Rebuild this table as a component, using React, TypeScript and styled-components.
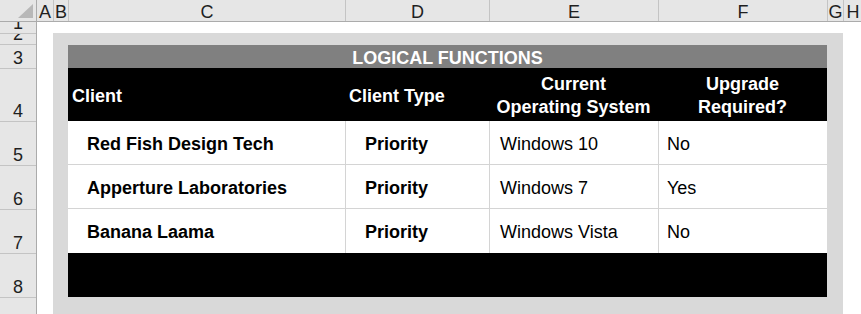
import React from "react";
import styled, { createGlobalStyle, css } from "styled-components";

const GlobalStyle = createGlobalStyle`
  html, body {
    margin: 0;
    padding: 0;
    background: #ffffff;
  }
  body {
    font-family: "Liberation Sans", Arial, sans-serif;
  }
`;

const COLUMNS = [
  { label: "A", width: 17 },
  { label: "B", width: 15 },
  { label: "C", width: 277 },
  { label: "D", width: 144 },
  { label: "E", width: 169 },
  { label: "F", width: 169 },
  { label: "G", width: 16 },
  { label: "H", width: 18 },
];

const ROWS = [
  { label: "1", height: 12 },
  { label: "2", height: 11 },
  { label: "3", height: 24 },
  { label: "4", height: 53 },
  { label: "5", height: 44 },
  { label: "6", height: 44 },
  { label: "7", height: 44 },
  { label: "8", height: 44 },
  { label: "9", height: 44 },
];

const CLIENTS = [
  { name: "Red Fish Design Tech", type: "Priority", os: "Windows 10", upgrade: "No" },
  { name: "Apperture Laboratories", type: "Priority", os: "Windows 7", upgrade: "Yes" },
  { name: "Banana Laama", type: "Priority", os: "Windows Vista", upgrade: "No" },
];

const Spreadsheet = styled.div`
  display: grid;
  grid-template-columns: 37px 1fr;
  grid-template-rows: 22px 1fr;
  width: 861px;
  height: 314px;
  overflow: hidden;
  background: #ffffff;
`;

const Corner = styled.div`
  display: flex;
  align-items: flex-start;
  justify-content: flex-start;
  background: #e6e6e6;
  border-right: 1px solid #ababab;
  border-bottom: 1px solid #ababab;
`;

const ColumnBar = styled.div`
  display: flex;
  background: #e6e6e6;
  border-bottom: 1px solid #ababab;
  overflow: hidden;
`;

const ColumnLabel = styled.div<{ $width: number }>`
  flex: none;
  width: ${(p) => p.$width}px;
  box-sizing: border-box;
  display: flex;
  align-items: flex-end;
  justify-content: center;
  border-right: 1px solid #c4c4c4;
  font-size: 18px;
  line-height: 18px;
  color: #1f1f1f;
  overflow: hidden;
  &:last-child {
    border-right: none;
  }
`;

const RowBar = styled.div`
  display: flex;
  flex-direction: column;
  background: #e6e6e6;
  border-right: 1px solid #ababab;
  overflow: hidden;
`;

const RowLabel = styled.div<{ $height: number }>`
  flex: none;
  height: ${(p) => p.$height}px;
  box-sizing: border-box;
  display: flex;
  align-items: flex-end;
  justify-content: center;
  padding-bottom: 1px;
  border-bottom: 1px solid #c4c4c4;
  font-size: 18px;
  line-height: 18px;
  color: #1f1f1f;
  overflow: hidden;
`;

const Sheet = styled.div`
  display: flex;
  padding: 11px 18px 0 16px;
  overflow: hidden;
`;

const Frame = styled.div`
  flex: 1;
  background: #d9d9d9;
  padding: 12px 16px 17px 15px;
`;

const Table = styled.div`
  display: grid;
  grid-template-columns: 277px 144px 169px 169px;
  grid-template-rows: 23px 53px repeat(3, 44px) 44px;
  color: #000000;
  font-size: 18px;
`;

const Title = styled.div`
  grid-column: 1 / -1;
  background: #808080;
  color: #ffffff;
  font-weight: 700;
  padding-top: 3px;
  line-height: 20px;
  text-align: center;
`;

const HeaderCell = styled.div<{ $center?: boolean }>`
  display: flex;
  align-items: center;
  padding-top: 3px;
  background: #000000;
  color: #ffffff;
  font-weight: 700;
  line-height: 23px;
  ${(p) =>
    p.$center
      ? css`
          justify-content: center;
          text-align: center;
        `
      : css`
          padding-left: 4px;
        `}
`;

const Cell = styled.div<{ $bold?: boolean; $indent: number; $divider?: boolean; $lined?: boolean }>`
  display: flex;
  align-items: center;
  padding-top: 3px;
  background: #ffffff;
  padding-left: ${(p) => p.$indent}px;
  font-weight: ${(p) => (p.$bold ? 700 : 400)};
  white-space: nowrap;
  ${(p) => p.$divider && "border-left: 1px solid #d4d4d4;"}
  ${(p) => p.$lined && "border-bottom: 1px solid #d4d4d4;"}
`;

const Footer = styled.div`
  grid-column: 1 / -1;
  background: #000000;
`;

function SelectAll() {
  return (
    <svg width="36" height="21" viewBox="0 0 36 21">
      <polygon points="18,18 33,18 33,4" fill="#b8b8b8" />
    </svg>
  );
}

function App() {
  return (
    <>
      <GlobalStyle />
      <Spreadsheet>
        <Corner>
          <SelectAll />
        </Corner>
        <ColumnBar>
          {COLUMNS.map((col) => (
            <ColumnLabel key={col.label} $width={col.width}>
              {col.label}
            </ColumnLabel>
          ))}
        </ColumnBar>
        <RowBar>
          {ROWS.map((row) => (
            <RowLabel key={row.label} $height={row.height}>
              {row.label}
            </RowLabel>
          ))}
        </RowBar>
        <Sheet>
          <Frame>
            <Table>
              <Title>LOGICAL FUNCTIONS</Title>
              <HeaderCell>Client</HeaderCell>
              <HeaderCell>Client Type</HeaderCell>
              <HeaderCell $center>
                Current
                <br />
                Operating System
              </HeaderCell>
              <HeaderCell $center>
                Upgrade
                <br />
                Required?
              </HeaderCell>
              {CLIENTS.map((c, i) => {
                const lined = i < CLIENTS.length - 1;
                return (
                  <React.Fragment key={c.name}>
                    <Cell $bold $indent={19} $lined={lined}>
                      {c.name}
                    </Cell>
                    <Cell $bold $indent={19} $divider $lined={lined}>
                      {c.type}
                    </Cell>
                    <Cell $indent={10} $divider $lined={lined}>
                      {c.os}
                    </Cell>
                    <Cell $indent={8} $divider $lined={lined}>
                      {c.upgrade}
                    </Cell>
                  </React.Fragment>
                );
              })}
              <Footer />
            </Table>
          </Frame>
        </Sheet>
      </Spreadsheet>
    </>
  );
}

export default App;
